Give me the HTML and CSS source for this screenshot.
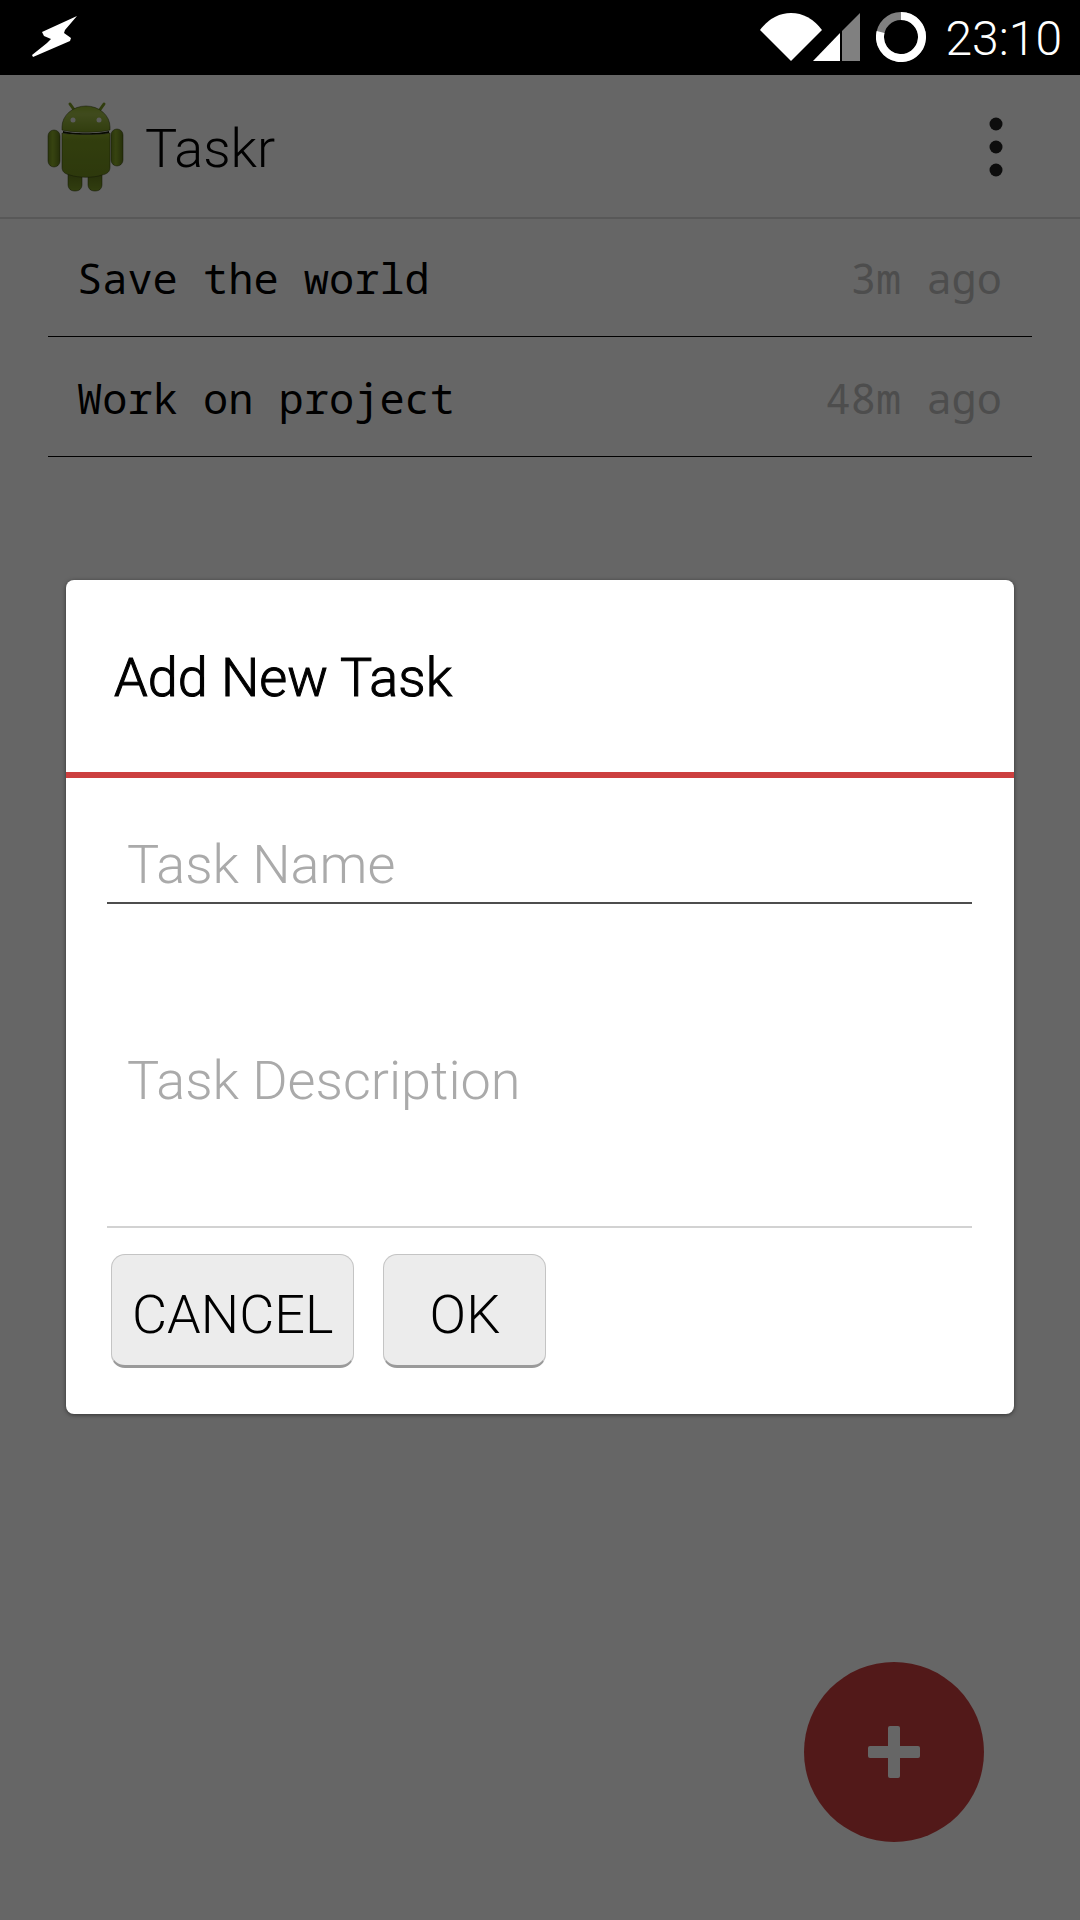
FILE: index.html
```html
<!DOCTYPE html>
<html lang="en">
<head>
<meta charset="utf-8">
<meta name="viewport" content="width=device-width, initial-scale=1">
<title>Taskr</title>
<link rel="stylesheet" href="styles.css">
</head>
<body>
<div class="status-bar">
  <svg class="bolt" width="48" height="44" viewBox="0 0 48 44" aria-hidden="true">
    <path d="M46 1 11 17l2 4 7 3-4 4L1 40l1 2 37-16 1-3-7-5 1-3z" fill="#fff"/>
  </svg>
  <div class="status-icons">
    <svg width="100" height="48" viewBox="0 0 100 48" aria-hidden="true">
      <path d="M0 17Q13 0 31 0t31 17L31 48z" fill="#fff"/>
      <path d="M53 48 80 20v28z" fill="#fff"/>
      <path d="M82 18 100 0v48H82z" fill="#808080"/>
    </svg>
    <svg width="50" height="50" viewBox="0 0 50 50" aria-hidden="true">
      <circle cx="25" cy="25" r="21" fill="none" stroke="#808080" stroke-width="8"/>
      <path d="M25 4A21 21 0 1 1 4.600 20" fill="none" stroke="#fff" stroke-width="8"/>
    </svg>
    <time class="clock">23:10</time>
  </div>
</div>

<div class="app">
  <header class="action-bar">
    <svg class="logo" width="78" height="92" viewBox="0 0 78 92" aria-hidden="true">
      <defs>
        <linearGradient id="head" x1="0" y1="0" x2="0" y2="1">
          <stop offset="0" stop-color="#8fb02c"/><stop offset=".3" stop-color="#a0bb4a"/><stop offset="1" stop-color="#7c9a24"/>
        </linearGradient>
        <linearGradient id="torso" x1="0" y1="0" x2="0" y2="1">
          <stop offset="0" stop-color="#8dad2a"/><stop offset=".15" stop-color="#7d9b22"/><stop offset="1" stop-color="#728e20"/>
        </linearGradient>
        <linearGradient id="limb" x1="0" y1="0" x2="1" y2="0">
          <stop offset="0" stop-color="#6c871e"/><stop offset=".4" stop-color="#8aa92a"/><stop offset="1" stop-color="#5e761a"/>
        </linearGradient>
        <linearGradient id="leg" x1="0" y1="0" x2="0" y2="1">
          <stop offset="0" stop-color="#536814"/><stop offset="1" stop-color="#7d9b28"/>
        </linearGradient>
      </defs>
      <path d="m23 3 5 7M57 3l-5 7" stroke="#7c9a24" stroke-width="3" stroke-linecap="round"/>
      <g stroke="#2c380a" stroke-opacity=".5">
        <path d="M15 29v-3a24 21 0 0 1 48 0v3c-9 3-39 3-48 0z" fill="url(#head)"/>
        <rect x="21" y="64" width="14" height="26" rx="6" fill="url(#leg)"/>
        <rect x="41" y="64" width="14" height="26" rx="6" fill="url(#leg)"/>
        <rect x="1" y="29" width="12" height="37" rx="6" fill="url(#limb)"/>
        <rect x="64" y="28" width="12" height="37" rx="6" fill="url(#limb)"/>
        <path d="M15 32c9 2 39 2 48 0v34c0 5-3 7-8 8-8 3-24 3-32 0-5-1-8-3-8-8z" fill="url(#torso)"/>
      </g>
      <path d="M16 30c9 3 37 3 46 0v2c-9 2-37 2-46 0z" fill="#141a02"/>
      <circle cx="26" cy="19" r="2.500" fill="#e6e6e6"/><circle cx="52" cy="19" r="2.500" fill="#e6e6e6"/>
    </svg>
    <h1 class="app-name">Taskr</h1>
    <button class="overflow" type="button" aria-label="More options">
      <svg width="14" height="60" viewBox="0 0 14 60" aria-hidden="true" fill="#222">
        <circle cx="7" cy="7" r="6.500"/><circle cx="7" cy="30" r="6.500"/><circle cx="7" cy="53" r="6.500"/>
      </svg>
    </button>
  </header>

  <main>
    <ul class="tasks">
      <li class="task"><span>Save the world</span><time class="age">3m ago</time></li>
      <li class="task"><span>Work on project</span><time class="age">48m ago</time></li>
    </ul>
  </main>

  <button class="fab" type="button" aria-label="Add task">
    <svg width="52" height="52" viewBox="0 0 52 52" aria-hidden="true" fill="#fff">
      <rect x="20" width="12" height="52" rx="2"/><rect y="20" width="52" height="12" rx="2"/>
    </svg>
  </button>

  <div class="scrim">
    <form class="dialog" role="dialog" aria-modal="true" aria-labelledby="dialog-title">
      <h2 class="dialog-title" id="dialog-title">Add New Task</h2>
      <div class="dialog-body">
        <input class="field field-name" type="text" aria-label="Task Name" placeholder="Task Name">
        <textarea class="field field-description" aria-label="Task Description" placeholder="Task Description"></textarea>
        <div class="actions">
          <button class="btn" type="button">CANCEL</button>
          <button class="btn" type="submit">OK</button>
        </div>
      </div>
    </form>
  </div>
</div>
</body>
</html>
```

FILE: styles.css
```css
* {
  box-sizing: border-box;
}

body {
  margin: 0;
  min-height: 100vh;
  display: flex;
  flex-direction: column;
  background: #fff;
  color: #000;
  font-family: Roboto, sans-serif;
  font-weight: 300;
}

svg {
  display: block;
  flex: none;
}

button {
  font: inherit;
  color: inherit;
}

/* System status bar */
.status-bar {
  display: flex;
  align-items: center;
  justify-content: space-between;
  height: 75px;
  padding: 0 18px 2px 31px;
  background: #000;
  color: #fff;
}

.status-icons {
  display: flex;
  align-items: center;
  gap: 16px;
}

.clock {
  padding: 4px 0 0 3px;
  font-size: 48px;
  line-height: 56px;
}

/* App screen */
.app {
  position: relative;
  flex: 1;
}

.action-bar {
  display: flex;
  align-items: center;
  height: 142px;
  padding: 2px 73px 0 47px;
  box-shadow: 0 2px 0 #dcdcdc;
}

.app-name {
  flex: 1;
  margin: 0 0 0 20px;
  padding-top: 4px;
  font-size: 54px;
  font-weight: 300;
  line-height: 64px;
}

.overflow {
  padding: 20px 4px;
  border: 0;
  background: none;
}

.tasks {
  margin: 0 48px;
  padding: 0;
  list-style: none;
}

.task {
  display: flex;
  align-items: center;
  justify-content: space-between;
  height: 120px;
  padding: 2px 30px 0 29px;
  border-bottom: 1px solid #000;
  font-family: "Droid Sans Mono", "Noto Sans Mono", "DejaVu Sans Mono", monospace;
  font-size: 42px;
  font-weight: 400;
}

.age {
  color: #c0c0c0;
}

.fab {
  position: absolute;
  right: 96px;
  bottom: 78px;
  display: grid;
  place-items: center;
  width: 180px;
  height: 180px;
  padding: 0;
  border: 0;
  border-radius: 50%;
  background: #cc3f3f;
}

/* Add-task dialog */
.scrim {
  position: absolute;
  inset: 0;
  display: flex;
  align-items: center;
  justify-content: center;
  padding: 0 66px 1px;
  background: rgba(0, 0, 0, 0.6);
}

.dialog {
  flex: 1;
  border-radius: 8px;
  background: #fff;
  box-shadow: 0 1px 4px rgba(0, 0, 0, 0.5);
}

.dialog-title {
  margin: 0;
  padding: 66px 48px 62px;
  border-bottom: 6px solid #cc3f3f;
  font-size: 54px;
  font-weight: 300;
  line-height: 64px;
  -webkit-text-stroke: 1px #000;
}

.dialog-body {
  display: flex;
  flex-direction: column;
  padding: 46px 42px 46px 41px;
}

.field {
  width: 100%;
  padding: 2px 20px 0;
  border: 0;
  border-bottom: 2px solid #4d4d4d;
  border-radius: 0;
  outline: 0;
  background: none;
  font: 300 54px/64px Roboto, sans-serif;
  resize: none;
}

.field::placeholder {
  color: #aaa;
  opacity: 1;
}

.field-name {
  height: 80px;
}

.field-description {
  height: 324px;
  padding-top: 145px;
  border-bottom-color: #d2d2d2;
}

.actions {
  display: flex;
  gap: 29px;
  padding: 26px 4px 0;
}

.btn {
  min-width: 163px;
  height: 114px;
  padding: 10px 20px 0;
  border: 1px solid #c4c4c4;
  border-bottom: 3px solid #9a9a9a;
  border-radius: 14px;
  background: #ececec;
  font-size: 54px;
  line-height: 64px;
}
```
